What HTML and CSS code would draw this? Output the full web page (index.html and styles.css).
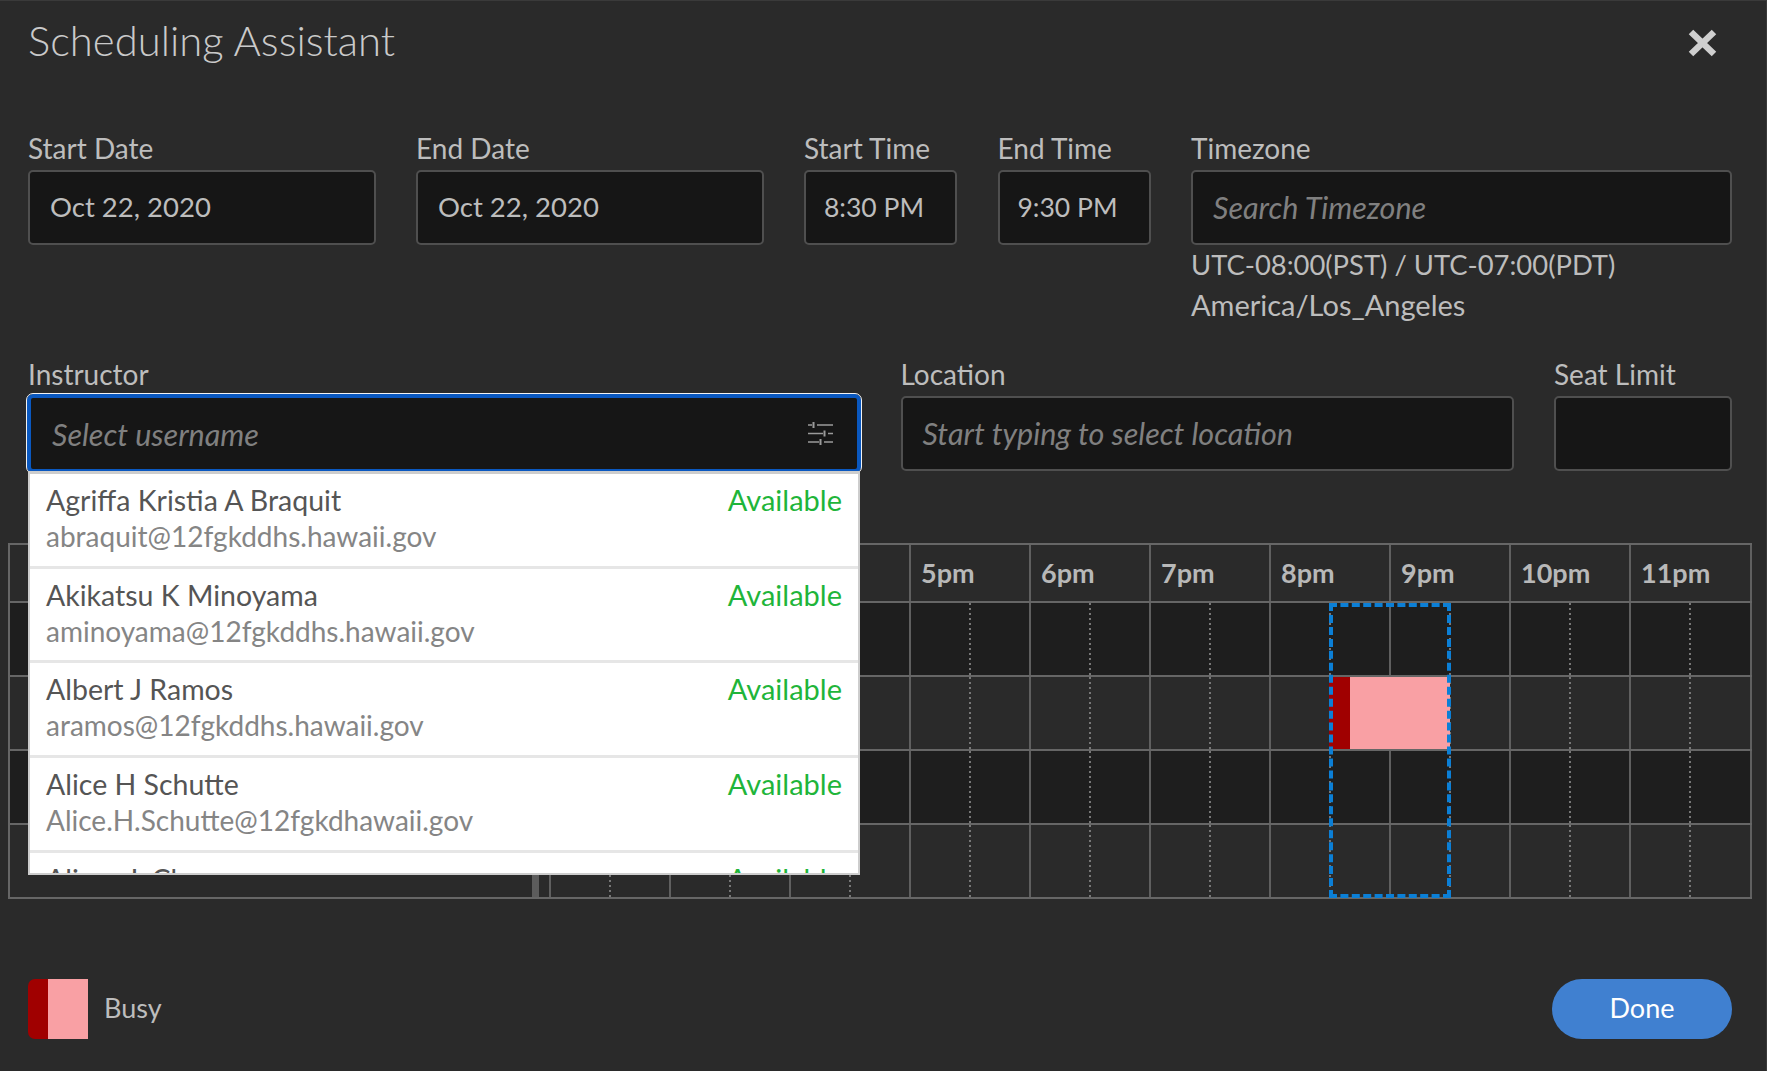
FILE: index.html
```html
<!DOCTYPE html>
<html lang="en">
<head>
<meta charset="UTF-8">
<title>Scheduling Assistant</title>
<link rel="stylesheet" href="styles.css">
</head>
<body>

<div class="modal">
    <div class="modal-head">
        <h1>Scheduling Assistant</h1>
        <button class="close-btn" aria-label="Close">
            <svg width="29" height="28" viewBox="0 0 29 28"><path d="M3 3 L26 25 M26 3 L3 25" fill="none" stroke="#cfcfcf" stroke-width="6.5"/></svg>
        </button>
    </div>

    <div class="form-row">
        <div class="field date-field">
            <label>Start Date</label>
            <div class="input">Oct 22, 2020</div>
        </div>
        <div class="field date-field">
            <label>End Date</label>
            <div class="input">Oct 22, 2020</div>
        </div>
        <div class="field time-field">
            <label>Start Time</label>
            <div class="input">8:30 PM</div>
        </div>
        <div class="field time-field">
            <label>End Time</label>
            <div class="input">9:30 PM</div>
        </div>
        <div class="field zone-field">
            <label>Timezone</label>
            <div class="input placeholder">Search Timezone</div>
            <div class="zone-info">UTC-08:00(PST) / UTC-07:00(PDT)</div>
            <div class="zone-info zone-name">America/Los_Angeles</div>
        </div>
    </div>

    <div class="form-row second-row">
        <div class="field instructor-field">
            <label>Instructor</label>
            <div class="input placeholder focused">
                <span>Select username</span>
                <svg width="25" height="24" viewBox="0 0 25 24">
                    <path d="M0 3h4M9 3h16M0 11.5h15M20 11.5h5M0 20h11M16 20h9" stroke="#9a9a9a" stroke-width="1.5" fill="none"/>
                    <path d="M5.5 0v6M16.5 8.500v6M12.500 17v6" stroke="#9a9a9a" stroke-width="2" fill="none"/>
                </svg>
            </div>
            <div class="user-menu">
                <div class="user-item">
                    <div><div class="user-name">Agriffa Kristia A Braquit</div><div class="user-mail">abraquit@12fgkddhs.hawaii.gov</div></div>
                    <div class="user-status">Available</div>
                </div>
                <div class="user-item">
                    <div><div class="user-name">Akikatsu K Minoyama</div><div class="user-mail">aminoyama@12fgkddhs.hawaii.gov</div></div>
                    <div class="user-status">Available</div>
                </div>
                <div class="user-item">
                    <div><div class="user-name">Albert J Ramos</div><div class="user-mail">aramos@12fgkddhs.hawaii.gov</div></div>
                    <div class="user-status">Available</div>
                </div>
                <div class="user-item">
                    <div><div class="user-name">Alice H Schutte</div><div class="user-mail">Alice.H.Schutte@12fgkdhawaii.gov</div></div>
                    <div class="user-status">Available</div>
                </div>
                <div class="user-item">
                    <div><div class="user-name">Alison L Chun</div></div>
                    <div class="user-status">Available</div>
                </div>
            </div>
        </div>
        <div class="field location-field">
            <label>Location</label>
            <div class="input placeholder">Start typing to select location</div>
        </div>
        <div class="field seat-field">
            <label>Seat Limit</label>
            <div class="input"></div>
        </div>
    </div>

    <div class="schedule">
        <div class="sched-row sched-head">
            <div class="name-col"></div>
            <div class="hour"></div><div class="hour"></div><div class="hour"></div>
            <div class="hour">5pm</div><div class="hour">6pm</div><div class="hour">7pm</div><div class="hour">8pm</div>
            <div class="hour">9pm</div><div class="hour">10pm</div><div class="hour">11pm</div>
        </div>
        <div class="sched-row dark" id="row1"></div>
        <div class="sched-row" id="row2"></div>
        <div class="sched-row dark" id="row3"></div>
        <div class="sched-row" id="row4"></div>
        <div class="busy-block"></div>
        <div class="selection"></div>
    </div>

    <div class="modal-foot">
        <div class="legend">
            <div class="busy-swatch"></div>
            <span class="legend-text">Busy</span>
        </div>
        <button class="done-btn">Done</button>
    </div>
</div>

<script>
    // body rows are all the same: name column + 10 hour cells
    ['row1', 'row2', 'row3', 'row4'].forEach(id => {
        const row = document.getElementById(id);
        let html = '<div class="name-col"></div>';
        for (let i = 0; i < 10; i++) {
            html += '<div class="hour slot"></div>';
        }
        row.innerHTML = html;
    });
</script>

</body>
</html>
```

FILE: styles.css
```css
* {
    box-sizing: border-box;
}
body {
    margin: 0;
    background-color: #2a2a2a;
    font-family: Lato, "Open Sans", sans-serif;
    font-weight: 400;
    color: #bdbdbd;
}
.modal {
    height: 1071px;
    padding: 0 34px 0 28px;
    border-top: 1px solid #3a3a3a;
    border-right: 1px solid #3a3a3a;
    overflow: hidden;
}
.modal-head {
    height: 128px;
    display: flex;
    justify-content: space-between;
    align-items: flex-start;
}
h1 {
    margin: 16px 0 0;
    font-size: 41.8px;
    line-height: 46px;
    font-weight: 300;
    color: #cacaca;
}
.close-btn {
    margin: 28px 15px 0 0;
    padding: 0;
    background: none;
    border: none;
    line-height: 0;
}
.form-row {
    display: flex;
    gap: 40.5px;
}
.second-row {
    margin-top: 30px;
}
.field {
    flex: none;
    position: relative;
}
.date-field {
    width: 347.5px;
}
.time-field {
    width: 153px;
}
.zone-field {
    flex: 1;
}
.instructor-field {
    width: 832px;
}
.location-field {
    width: 613px;
}
.seat-field {
    flex: 1;
}
label {
    display: block;
    height: 41px;
    font-size: 28px;
    line-height: 39px;
}
.input {
    height: 75px;
    padding: 0 20px 2px;
    display: flex;
    justify-content: space-between;
    align-items: center;
    background-color: #161616;
    border: 2px solid #4f4f4f;
    border-radius: 5px;
    font-size: 27.5px;
}
.time-field .input {
    padding: 0 18px 2px;
    font-size: 26.5px;
}
.input.placeholder {
    font-style: italic;
    font-size: 30.5px;
    color: #808080;
}
.input.focused {
    margin: -2px -1px;
    height: 79px;
    padding: 0 24px 0 21px;
    border: 4px solid #0a58c0;
    outline: 1px solid #f2f2f2;
    border-radius: 6px;
}
.zone-info {
    height: 40px;
    font-size: 27.4px;
    line-height: 40px;
}
.zone-info.zone-name {
    font-size: 29px;
}
.user-menu {
    position: absolute;
    z-index: 5;
    top: 116px;
    left: 0;
    width: 832px;
    height: 404px;
    background-color: #fff;
    border: 2px solid #cdcdcd;
    border-top-width: 3px;
    overflow: hidden;
}
.user-item {
    height: 94.700px;
    padding: 8px 16px 0;
    display: flex;
    justify-content: space-between;
    border-bottom: 3px solid #e6e6e6;
    font-size: 28px;
}
.user-name {
    font-size: 28.5px;
    line-height: 36px;
    color: #555;
}
.user-mail {
    line-height: 36px;
    color: #858585;
}
.user-status {
    font-size: 29px;
    line-height: 36px;
    color: #1fb53a;
}
.schedule {
    position: relative;
    margin: 72px -20px 0 -20px;
    border-top: 2px solid #666;
    border-left: 2px solid #666;
}
.sched-row {
    display: flex;
    height: 74px;
    border-bottom: 2px solid #666;
}
.sched-head {
    height: 58px;
}
.dark {
    background-color: #1e1e1e;
}
.name-col {
    flex: none;
    width: 539px;
    background: linear-gradient(#5c5c5c, #5c5c5c) 522px 0 / 7px 100% no-repeat;
}
.hour {
    flex: none;
    width: 120px;
    border-left: 2px solid #5f5f5f;
    padding-left: 10px;
    font-size: 27px;
    font-weight: 700;
    line-height: 56px;
    color: #b8b8b8;
}
.hour.slot {
    background: repeating-linear-gradient(to bottom, #777 0 2px, transparent 2px 5px) 58px 0 / 2px 100% no-repeat;
}
.hour:last-child {
    width: 123px;
    border-right: 2px solid #5f5f5f;
}
.busy-block {
    position: absolute;
    left: 1319px;
    top: 132px;
    width: 121px;
    height: 72px;
    background-color: #f9a0a4;
    border-left: 21px solid #a00000;
}
.selection {
    position: absolute;
    left: 1319px;
    top: 58px;
    width: 122px;
    height: 295px;
    border: 4px dashed #0b7fd6;
}
.modal-foot {
    margin-top: 80px;
    display: flex;
    justify-content: space-between;
    align-items: center;
}
.legend {
    display: flex;
    align-items: center;
    gap: 16px;
    font-size: 27px;
    color: #bdbdbd;
}
.legend-text {
    padding-bottom: 3px;
}
.busy-swatch {
    width: 60px;
    height: 60px;
    background-color: #f9a0a4;
    border-left: 20px solid #a00000;
    border-radius: 7px 0 0 7px;
}
.done-btn {
    width: 180px;
    height: 60px;
    padding: 0 0 3px;
    background-color: #4080d0;
    border: none;
    border-radius: 30px;
    color: #fff;
    font-family: inherit;
    font-size: 27px;
    font-weight: 400;
}
```
